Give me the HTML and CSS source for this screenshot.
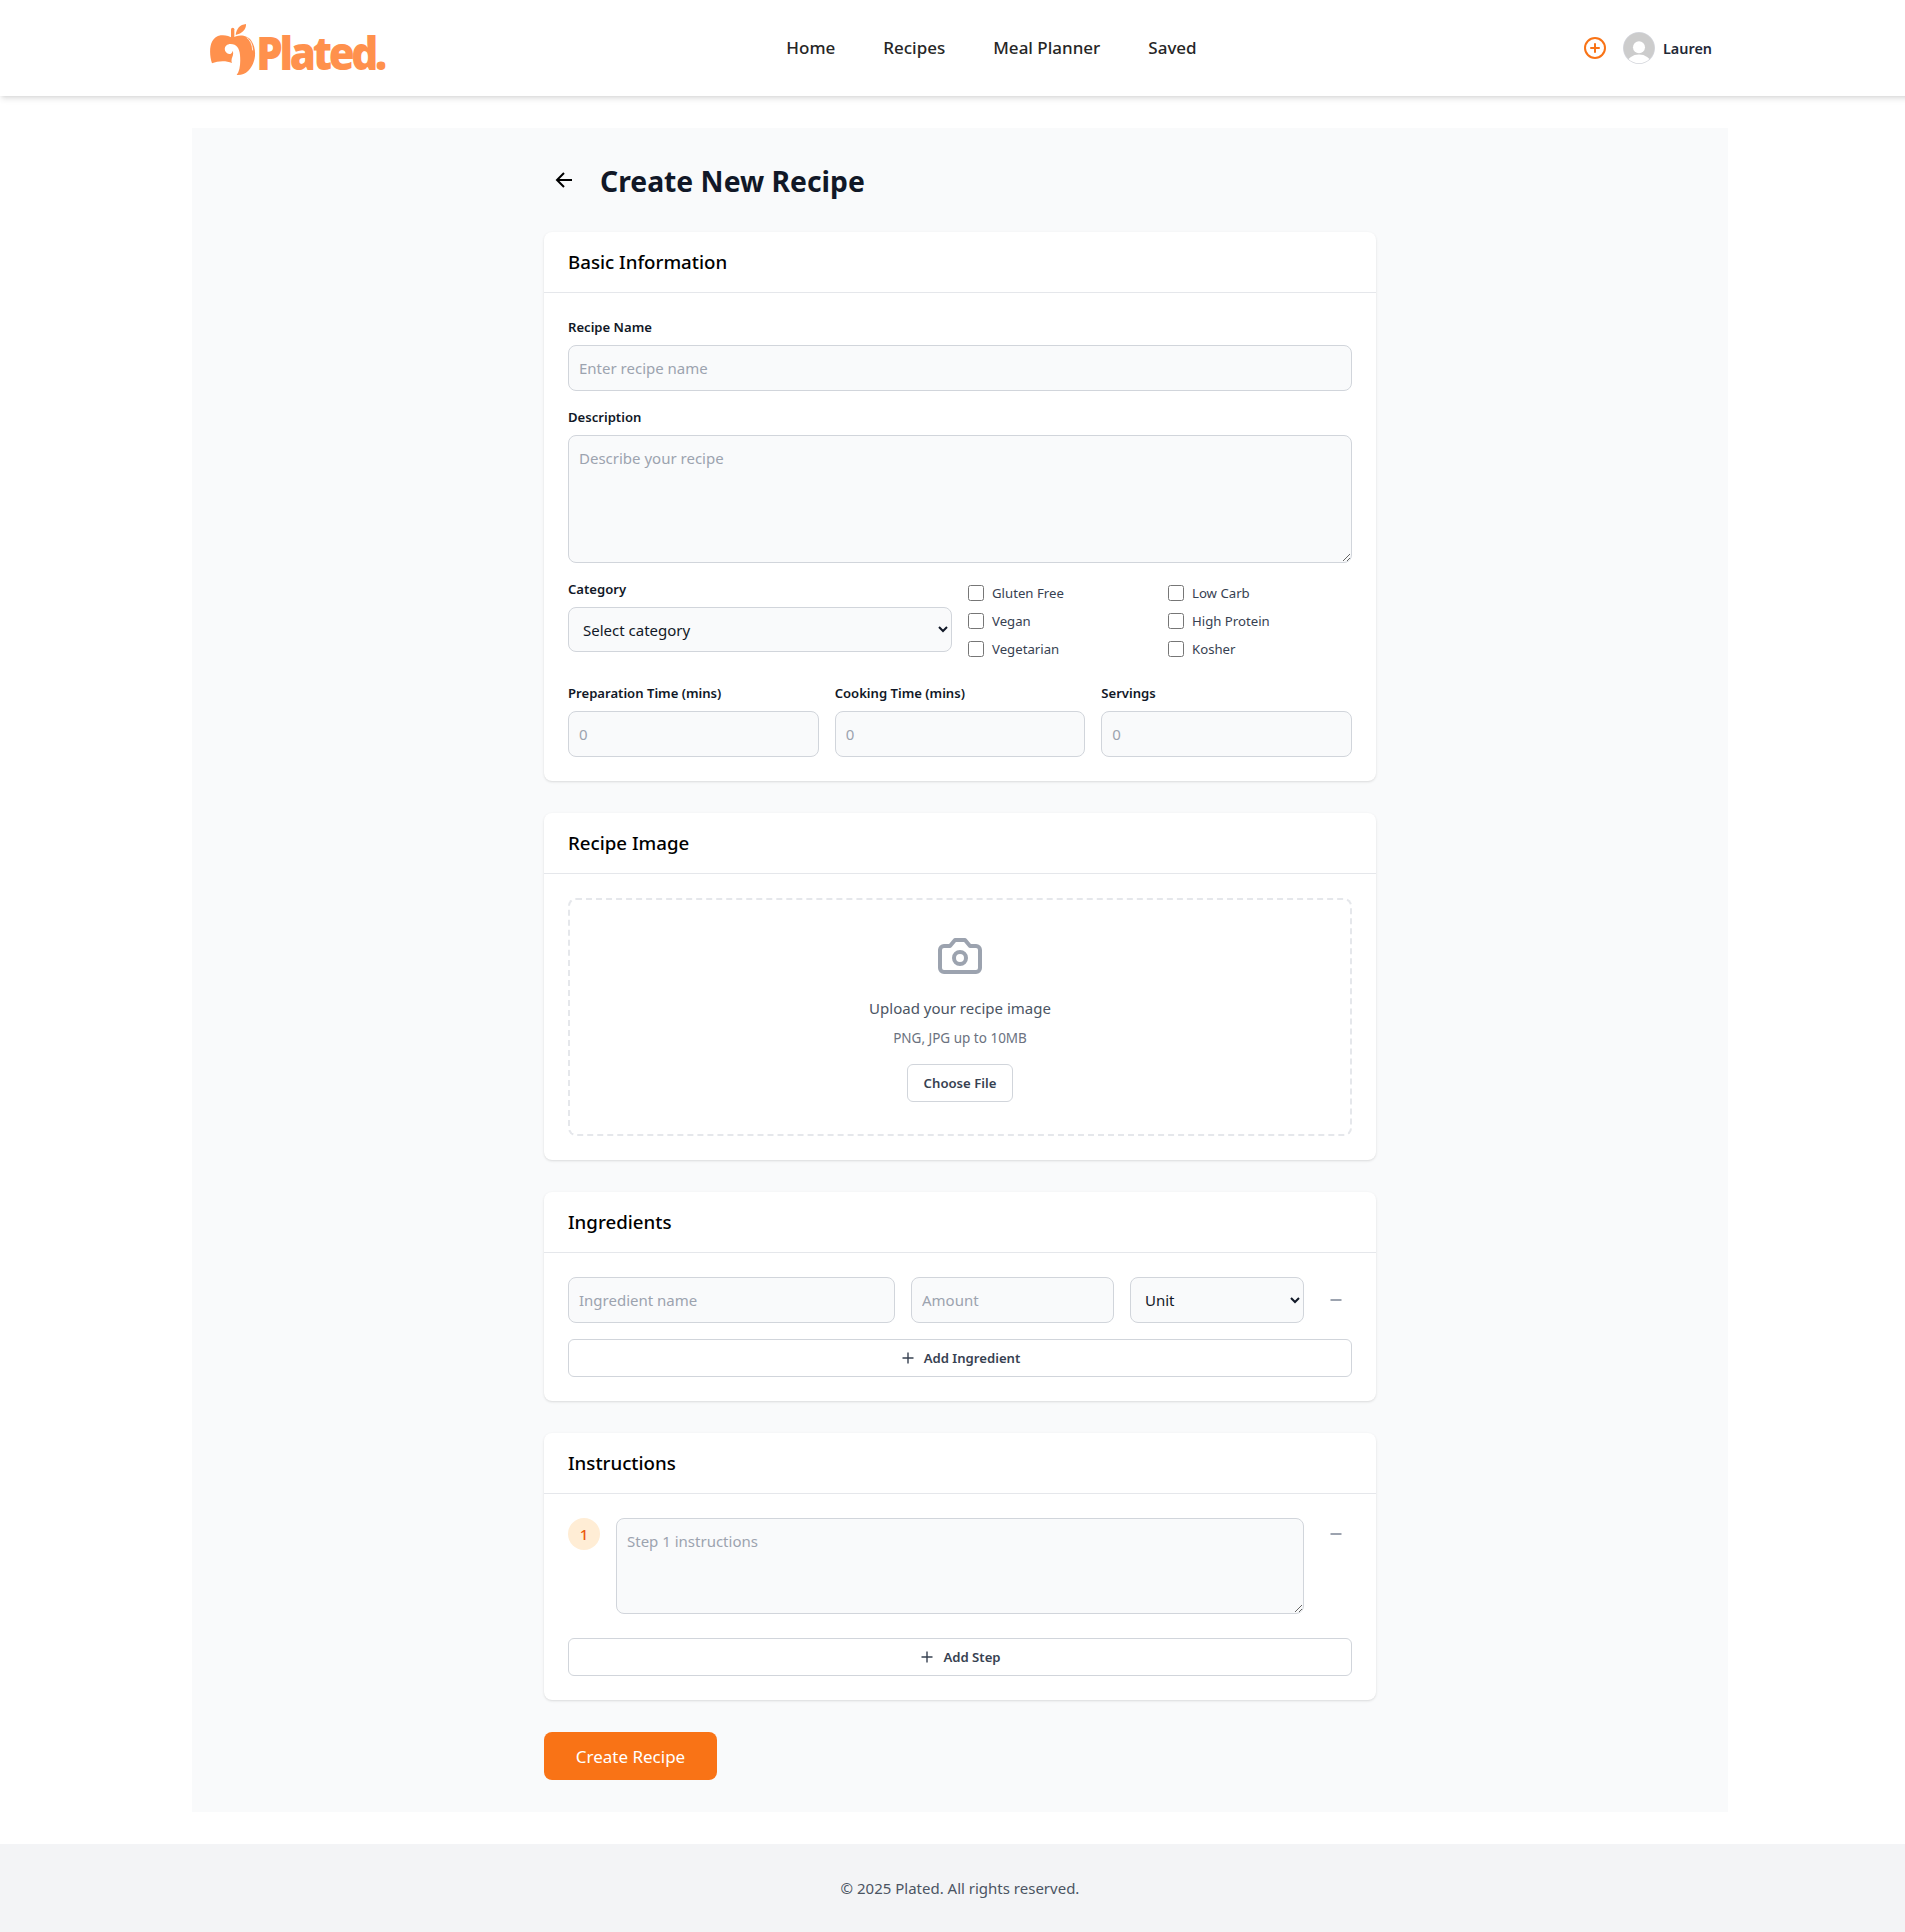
FILE: index.html
```html
<!DOCTYPE html>
<html lang="en">
<head>
<meta charset="utf-8">
<title>Plated - Create New Recipe</title>
<link rel="stylesheet" href="styles.css">
</head>
<body>
<div class="page">
  <header class="site-header">
    <div class="header-inner">
      <a class="logo" aria-label="Plated">
        <svg width="192" height="84" viewBox="84 18 576 252">
          <path fill="#ff914d" d="M96 190C86 160 86 112 122 106C135 104 148 108 158 114C170 104 200 102 214 122C232 148 228 190 205 212C195 222 183 226 170 225C180 212 182 190 180 165C178 145 170 132 152 132C138 132 131 143 136 154C141 164 156 166 158 152C164 168 150 176 156 189C138 181 114 182 96 190Z"/>
          <path fill="#ff914d" d="M167 105C169 86 180 74 198 72C199 88 186 101 167 105Z"/>
          <path fill="none" stroke="#ff914d" stroke-width="10" stroke-linecap="round" d="M158 88V114"/>
          <path fill="none" stroke="#fff" stroke-width="2.5" stroke-linecap="round" d="M201 113C212 121 217 134 218 150"/>
          <text class="logo-text" transform="translate(229 209) scale(.9 1)" x="0" y="0" textLength="436" lengthAdjust="spacing">Plated.</text>
        </svg>
      </a>
      <nav class="nav"><a>Home</a><a>Recipes</a><a>Meal Planner</a><a>Saved</a></nav>
      <div class="user">
        <svg class="add" width="24" height="24" viewBox="0 0 24 24" fill="none" stroke="currentColor" stroke-width="2" stroke-linecap="round"><circle cx="12" cy="12" r="10"/><path d="M8 12h8M12 8v8"/></svg>
        <div class="profile">
          <svg width="32" height="32" viewBox="0 0 32 32"><defs><clipPath id="av"><circle cx="16" cy="16" r="15.3"/></clipPath></defs><circle cx="16" cy="16" r="16" fill="#d5d7de"/><g clip-path="url(#av)"><path fill="#ccc" d="M0 0h32v32H0z"/><circle cx="16" cy="15.2" r="6" fill="#fff"/><ellipse cx="16" cy="31" rx="11.5" ry="8.5" fill="#fff"/></g></svg>
          <span>Lauren</span>
        </div>
      </div>
    </div>
  </header>
  <main class="main">
    <form class="form">
      <div class="title-row">
        <button type="button" class="back" aria-label="Back"><svg width="24" height="24" viewBox="0 0 24 24" fill="none" stroke="currentColor" stroke-width="2"><path d="m12 19-7-7 7-7M20 12H5"/></svg></button>
        <h1>Create New Recipe</h1>
      </div>
      <section class="card">
        <h2>Basic Information</h2>
        <div class="card-body basic">
          <label class="field"><span>Recipe Name</span><input type="text" placeholder="Enter recipe name"></label>
          <label class="field"><span>Description</span><textarea class="description" placeholder="Describe your recipe"></textarea></label>
          <div class="two-cols">
            <label class="field"><span>Category</span><select><option>Select category</option></select></label>
            <div class="checks">
              <label><input type="checkbox"><span>Gluten Free</span></label>
              <label><input type="checkbox"><span>Low Carb</span></label>
              <label><input type="checkbox"><span>Vegan</span></label>
              <label><input type="checkbox"><span>High Protein</span></label>
              <label><input type="checkbox"><span>Vegetarian</span></label>
              <label><input type="checkbox"><span>Kosher</span></label>
            </div>
          </div>
          <div class="three-cols">
            <label class="field"><span>Preparation Time (mins)</span><input type="number" placeholder="0"></label>
            <label class="field"><span>Cooking Time (mins)</span><input type="number" placeholder="0"></label>
            <label class="field"><span>Servings</span><input type="number" placeholder="0"></label>
          </div>
        </div>
      </section>
      <section class="card">
        <h2>Recipe Image</h2>
        <div class="card-body">
          <div class="dropzone">
            <svg width="48" height="48" viewBox="0 0 24 24" fill="none" stroke="currentColor" stroke-width="2" stroke-linecap="round" stroke-linejoin="round"><path d="M14.5 4h-5L7 7H4a2 2 0 0 0-2 2v9a2 2 0 0 0 2 2h16a2 2 0 0 0 2-2V9a2 2 0 0 0-2-2h-3l-2.5-3z"/><circle cx="12" cy="13" r="3"/></svg>
            <p class="drop-title">Upload your recipe image</p>
            <p class="drop-hint">PNG, JPG up to 10MB</p>
            <button type="button" class="outline choose">Choose File</button>
          </div>
        </div>
      </section>
      <section class="card">
        <h2>Ingredients</h2>
        <div class="card-body ingredients">
          <div class="ingredient-row">
            <input type="text" placeholder="Ingredient name">
            <input type="text" placeholder="Amount">
            <select><option>Unit</option></select>
            <button type="button" class="remove" aria-label="Remove ingredient"><svg width="16" height="16" viewBox="0 0 16 16"><path d="M2.5 8h11" stroke="currentColor" stroke-width="2"/></svg></button>
          </div>
          <button type="button" class="outline"><svg width="16" height="16" viewBox="0 0 16 16"><path d="M2.5 8h11M8 2.5v11" stroke="currentColor" stroke-width="1.4"/></svg><span>Add Ingredient</span></button>
        </div>
      </section>
      <section class="card">
        <h2>Instructions</h2>
        <div class="card-body instructions">
          <div class="step-row">
            <span class="step">1</span>
            <textarea class="step-text" placeholder="Step 1 instructions"></textarea>
            <button type="button" class="remove" aria-label="Remove step"><svg width="16" height="16" viewBox="0 0 16 16"><path d="M2.5 8h11" stroke="currentColor" stroke-width="2"/></svg></button>
          </div>
          <button type="button" class="outline"><svg width="16" height="16" viewBox="0 0 16 16"><path d="M2.5 8h11M8 2.5v11" stroke="currentColor" stroke-width="1.4"/></svg><span>Add Step</span></button>
        </div>
      </section>
      <button type="button" class="submit">Create Recipe</button>
    </form>
  </main>
  <footer class="footer">© 2025 Plated. All rights reserved.</footer>
</div>
</body>
</html>
```
FILE: styles.css
```css
*{box-sizing:border-box}
body{margin:0;background:#fff;overflow-x:hidden;font-family:"Noto Sans","Open Sans",sans-serif;font-size:15px;line-height:24px;color:#111827}
h1,h2,p{margin:0}
button,input,select,textarea{font:inherit;color:inherit;margin:0}
.page{width:1920px}
.site-header{height:96px;background:#fff;box-shadow:0 4px 6px -1px rgba(0,0,0,.1),0 2px 4px -2px rgba(0,0,0,.1)}
.header-inner{width:1504px;height:96px;margin:0 auto;display:flex;justify-content:space-between;align-items:center}
.logo{display:flex}
.logo svg{overflow:visible}
.logo-text{font-family:"Noto Sans";font-weight:900;font-size:140px;fill:#ff914d}
.nav{display:flex;gap:48px;font-size:17px;font-weight:500;color:#262626}
.user{display:flex;align-items:center;gap:16px;font-size:14.4px;font-weight:600;color:#1f2937}
.add{color:#f97316}
.profile{display:flex;align-items:center;gap:8px}
.profile span{padding-top:1px}
.main{width:1536px;margin:32px auto;padding:32px 0;background:#f9fafb}
.form{width:832px;margin:0 auto}
.title-row{display:flex;align-items:center;gap:16px;height:40px;margin-bottom:32px}
.back{width:40px;height:40px;padding:0;border:0;background:none;color:#000;display:grid;place-items:center}
h1{padding-top:2px;font-size:28.3px;line-height:36px;font-weight:700}
.card{background:#fff;border-radius:8px;box-shadow:0 1px 3px rgba(0,0,0,.1),0 1px 2px -1px rgba(0,0,0,.1);margin-bottom:32px}
h2{padding:16px 24px;border-bottom:1px solid #e5e7eb;font-size:18.7px;line-height:28px;font-weight:500;color:#000}
.card-body{padding:24px}
.basic{display:grid;gap:16px}
.field{display:flex;flex-direction:column}
.field>span{font-size:13.1px;line-height:20px;font-weight:600;margin-bottom:8px}
input:not([type=checkbox]),select,textarea{display:block;width:100%;border:1px solid #d1d5db;border-radius:8px;background-color:#f9fafb;padding:10px}
input:not([type=checkbox]),.ingredients select{height:46px}
input[type=number]{appearance:textfield}
select{height:45px}
::placeholder{color:#9ca3af;opacity:1}
.description{height:128px}
.two-cols{display:grid;grid-template-columns:1fr 1fr;gap:16px}
.checks{display:grid;grid-template-columns:1fr 1fr;gap:8px 16px;padding:4px 0 8px}
.checks label{display:flex;align-items:center;gap:8px;height:20px;font-size:13.2px;line-height:20px;color:#374151}
.checks input{width:16px;height:16px}
.three-cols{display:grid;grid-template-columns:repeat(3,1fr);gap:16px}
.dropzone{border:2px dashed #e5e7eb;border-radius:8px;padding:32px;display:flex;flex-direction:column;align-items:center;color:#9ca3af}
.drop-title{margin-top:16px;color:#4b5563}
.drop-hint{margin:8px 0 16px;font-size:13.5px;line-height:20px;color:#6b7280}
.outline{display:flex;width:100%;height:38px;align-items:center;justify-content:center;gap:8px;background:#fff;border:1px solid #d1d5db;border-radius:6px;font-size:13.15px;line-height:20px;font-weight:600;color:#374151}
.choose{width:106px;padding:0}
.ingredients{display:grid;gap:16px}
.ingredient-row{display:grid;grid-template-columns:327px 203px 174px 32px;gap:16px;align-items:center}
.remove{flex:none;width:32px;height:32px;padding:0;border:0;background:none;color:#9ca3af;display:grid;place-items:center}
.instructions{display:grid;gap:24px}
.step-row{display:flex;gap:16px;align-items:flex-start}
.step{flex:none;width:32px;height:32px;border-radius:50%;background:#ffedd5;color:#ea580c;display:grid;place-items:center;font-weight:500}
.step-text{flex:1;height:96px}
.submit{display:block;width:173px;height:48px;padding:1px 0 0;border:0;border-radius:8px;background:#f97316;color:#fff;font-size:17px}
.footer{height:88px;background:#f3f4f6;display:grid;place-items:center;color:#4b5563}
```
